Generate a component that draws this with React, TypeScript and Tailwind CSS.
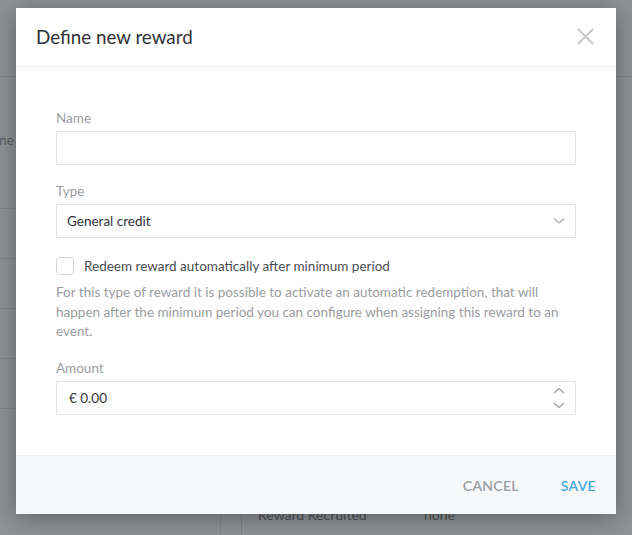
import React from "react";

const font = { fontFamily: "Lato, 'Open Sans', sans-serif" };

export default function App() {
  return (
    <div className="relative w-[632px] h-[535px] overflow-hidden bg-[#8f9297]" style={font}>
      {/* background page */}
      <div className="absolute inset-0 flex flex-col">
        <div className="h-[77px] border-b border-[#82858a]" />
        <div className="flex flex-1">
          <div className="w-[221px] flex flex-col border-r border-[#82858a]">
            <div className="h-[132px] border-b border-[#82858a] pt-[52px] text-[14px] text-[#5c5f64] overflow-hidden whitespace-nowrap">
              <span className="block -ml-[1px]">ne r</span>
            </div>
            <div className="h-[50px] border-b border-[#82858a]" />
            <div className="h-[50px] border-b border-[#82858a]" />
            <div className="h-[50px] border-b border-[#82858a]" />
            <div className="h-[50px] border-b border-[#82858a]" />
          </div>
          <div className="w-[21px] border-r border-[#82858a]" />
          <div className="flex-1 flex flex-col justify-end pb-[10px] pl-[16px]">
            <div className="flex text-[14px] text-[#4f5257]">
              <span className="w-[166px]">Reward Recruited</span>
              <span>none</span>
            </div>
          </div>
        </div>
      </div>

      {/* modal */}
      <div className="absolute left-[16px] top-[8px] w-[600px] h-[506px] bg-white flex flex-col shadow-[0_4px_24px_rgba(0,0,0,0.35)]">
        <div className="h-[59px] flex items-center justify-between pl-[20px] pr-[22px] border-b border-[#eef0f2]">
          <h2 className="text-[18.8px] text-[#2f3338] pt-[1px]">Define new reward</h2>
          <svg width="17" height="17" viewBox="0 0 17 17" className="mt-[-1px]">
            <path d="M1 1L16 16M16 1L1 16" stroke="#c8c9cb" strokeWidth="2" />
          </svg>
        </div>
        <div className="flex-1 px-[40px] pt-[43px]">
          <label className="block text-[13.5px] text-[#9a9da1] leading-[16px]">Name</label>
          <div className="mt-[5px] h-[34px] border border-[#e3e5e7]" />

          <label className="block mt-[18px] text-[13.5px] text-[#9a9da1] leading-[16px]">Type</label>
          <div className="mt-[5px] h-[34px] border border-[#e3e5e7] flex items-center justify-between pl-[10px] pr-[10px]">
            <span className="text-[13.5px] text-[#2f3338]">General credit</span>
            <svg width="12" height="8" viewBox="0 0 12 8">
              <path d="M1 1.5L6 6L11 1.5" stroke="#a7aaad" strokeWidth="1.2" fill="none" />
            </svg>
          </div>

          <div className="mt-[18px] flex items-center gap-[10px]">
            <div className="w-[18px] h-[18px] rounded-[4px] border border-[#cfd2d5]" />
            <span className="text-[13.5px] text-[#4a4d52]">Redeem reward automatically after minimum period</span>
          </div>
          <p className="mt-[7px] text-[13.5px] leading-[19.5px] text-[#9a9da1]">
            For this type of reward it is possible to activate an automatic redemption, that will happen after the minimum period you can configure when assigning this reward to an event.
          </p>

          <label className="block mt-[18px] text-[13.5px] text-[#9a9da1] leading-[16px]">Amount</label>
          <div className="mt-[5px] h-[34px] border border-[#e3e5e7] flex items-center justify-between pl-[12px] pr-[10px]">
            <span className="text-[13.5px] text-[#2f3338]">€ 0.00</span>
            <div className="flex flex-col gap-[8px]">
              <svg width="12" height="7" viewBox="0 0 12 7">
                <path d="M1 6L6 1.5L11 6" stroke="#9a9da1" strokeWidth="1.2" fill="none" />
              </svg>
              <svg width="12" height="7" viewBox="0 0 12 7">
                <path d="M1 1L6 5.5L11 1" stroke="#9a9da1" strokeWidth="1.2" fill="none" />
              </svg>
            </div>
          </div>
        </div>
        <div className="h-[59px] bg-[#f7f8fa] border-t border-[#eef0f2] flex items-center justify-end pr-[20px] gap-[42px]">
          <button className="text-[14px] font-semibold text-[#9a9da1] tracking-[0.3px]">CANCEL</button>
          <button className="text-[14px] font-semibold text-[#4aa8e0] tracking-[0.3px]">SAVE</button>
        </div>
      </div>
    </div>
  );
}
